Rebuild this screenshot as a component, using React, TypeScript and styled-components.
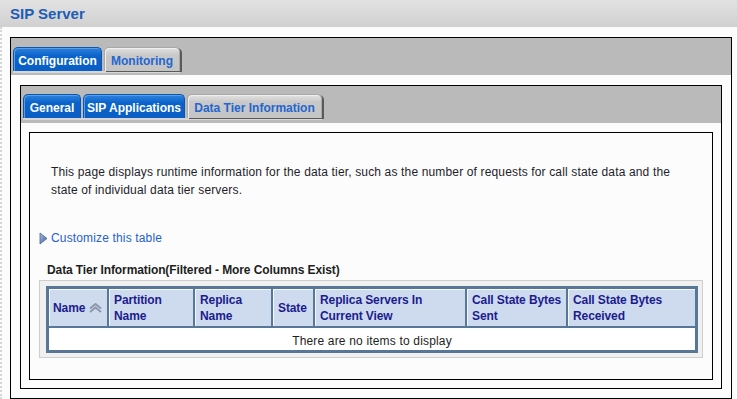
import React from 'react';
import styled, { createGlobalStyle } from 'styled-components';

const GlobalStyle = createGlobalStyle`
  body {
    margin: 0;
    background: #fcfcfc;
    font-family: "Liberation Sans", Arial, sans-serif;
    font-size: 12px;
    color: #1e1e1e;
  }
`;

const Header = styled.div`
  height: 27px;
  padding-left: 10px;
  background: linear-gradient(#e2e2e2, #d0d0d0);
  color: #1d5db5;
  font-size: 15px;
  font-weight: bold;
  line-height: 28px;
`;

const Page = styled.div`
  padding: 10px 5px 0 8px;
  border-left: 2px dotted #d6d6d6;
  height: 372px;
  box-sizing: border-box;
`;

const Frame = styled.div<{ $inset?: number }>`
  border: 1px solid #000;
  background: #fcfcfc;
  padding: 0 ${p => p.$inset ?? 9}px ${p => p.$inset ?? 9}px;
  margin-top: ${p => (p.$inset === 8 ? 10 : 0)}px;
`;

const TabBand = styled.div<{ $top: number }>`
  height: 37px;
  box-sizing: border-box;
  margin: 0 -${p => (p.$top === 9 ? 9 : 8)}px;
  padding: ${p => p.$top}px 0 0 2px;
  background: #bababa;
`;

const TabRow = styled.div`
  display: inline-flex;
  gap: 2px;
  border-bottom: 2px solid #d6d6d6;
`;

const Tab = styled.div<{ $active?: boolean; $w: number }>`
  width: ${p => p.$w}px;
  height: 24px;
  box-sizing: border-box;
  border-radius: 5px 5px 0 0;
  font-weight: bold;
  font-size: 12px;
  line-height: 26px;
  text-align: center;
  white-space: nowrap;
  color: ${p => (p.$active ? '#fff' : '#2366cf')};
  background: ${p =>
    p.$active
      ? 'linear-gradient(#2f82dc, #0a63cb 35%, #0a5ec4)'
      : 'linear-gradient(#e2e2e2, #c9c9c9 30%, #c4c4c4)'};
  border: 1px solid ${p => (p.$active ? '#0b56b0' : '#a8a8a8')};
  border-bottom: none;
  box-shadow: ${p => (p.$active ? 'inset 1px 1px 0 #5a9ee6' : 'inset 1px 1px 0 #f0f0f0, 2px 1px 0 #5a5a5a')};
`;

const Panel = styled.div`
  margin-top: 9px;
  border: 1px solid #000;
  background: #fcfcfc;
  padding: 30px 9px 21px;
`;

const Description = styled.p`
  margin: 0 12px;
  line-height: 18px;
  letter-spacing: 0.15px;
  color: #1e1e2a;
`;

const CustomizeLink = styled.a`
  display: flex;
  align-items: center;
  gap: 3px;
  margin-top: 30px;
  height: 18px;
  letter-spacing: 0.15px;
  color: #1f5fcf;
  text-decoration: none;
  cursor: pointer;
`;

const Caption = styled.div`
  margin: 15px 8px 0;
  line-height: 16px;
  font-weight: bold;
  letter-spacing: -0.1px;
  color: #1e1e1e;
`;

const TableWell = styled.div`
  margin-top: 2px;
  border: 1px solid #cecece;
  background: #f0f0f0;
  padding: 5px 5px 4px 6px;
`;

const Table = styled.table`
  width: 652px;
  table-layout: fixed;
  border-collapse: separate;
  border-spacing: 0;
  border: 3px solid #587797;
`;

const Th = styled.th<{ $w: number; $first?: boolean }>`
  width: ${p => p.$w}px;
  box-sizing: border-box;
  height: 39px;
  padding: 0 3px 0 ${p => (p.$first ? 4 : 5)}px;
  background: #cedbee;
  border-left: ${p => (p.$first ? 'none' : '2px solid #587797')};
  border-bottom: 2px solid #587797;
  box-shadow: inset 1px 1px 0 #f4f8fc;
  color: #1c1c8e;
  font-size: 12px;
  font-weight: bold;
  letter-spacing: -0.1px;
  line-height: 16px;
  text-align: left;
  vertical-align: middle;
`;

const EmptyCell = styled.td`
  height: 22px;
  padding: 3px 0 0;
  box-sizing: border-box;
  background: #fff;
  text-align: center;
  letter-spacing: 0.17px;
  color: #1e1e1e;
`;

const SortLabel = styled.span`
  display: inline-flex;
  align-items: center;
  gap: 3px;
`;

const Arrow = () => (
  <svg width="9" height="13" viewBox="0 0 9 13">
    <defs>
      <linearGradient id="tri" x1="0" y1="0" x2="1" y2="1">
        <stop offset="0" stopColor="#a9bde0" />
        <stop offset="1" stopColor="#3d5f9a" />
      </linearGradient>
    </defs>
    <path d="M1 1 L8 6.5 L1 12 Z" fill="url(#tri)" stroke="#4a6694" strokeWidth="0.8" />
  </svg>
);

const SortIcon = () => (
  <svg width="15" height="10" viewBox="0 0 15 10">
    <path d="M2 5.5 L7.5 1 L13 5.5" fill="none" stroke="#8b97ad" strokeWidth="2" />
    <path d="M2 9 L7.5 4.5 L13 9" fill="none" stroke="#8b97ad" strokeWidth="2" />
  </svg>
);

const columns = [
  { label: 'Name', w: 58 },
  { label: 'Partition Name', w: 86 },
  { label: 'Replica Name', w: 78 },
  { label: 'State', w: 42 },
  { label: 'Replica Servers In Current View', w: 152 },
  { label: 'Call State Bytes Sent', w: 101 },
  { label: 'Call State Bytes Received', w: 129 },
];

export default function App() {
  return (
    <>
      <GlobalStyle />
      <Header>SIP Server</Header>
      <Page>
        <Frame>
          <TabBand $top={9}>
            <TabRow>
              <Tab $active $w={89}>Configuration</Tab>
              <Tab $w={76}>Monitoring</Tab>
            </TabRow>
          </TabBand>
          <Frame $inset={8}>
            <TabBand $top={8}>
              <TabRow>
                <Tab $active $w={58}>General</Tab>
                <Tab $active $w={102}>SIP Applications</Tab>
                <Tab $w={135}>Data Tier Information</Tab>
              </TabRow>
            </TabBand>
            <Panel>
              <Description>
                This page displays runtime information for the data tier, such as the number of requests for call state data and the
                state of individual data tier servers.
              </Description>
              <CustomizeLink>
                <Arrow />
                Customize this table
              </CustomizeLink>
              <Caption>Data Tier Information(Filtered - More Columns Exist)</Caption>
              <TableWell>
                <Table>
                  <thead>
                    <tr>
                      {columns.map((c, i) => (
                        <Th key={c.label} $w={c.w} $first={i === 0}>
                          {i === 0 ? (
                            <SortLabel>
                              {c.label}
                              <SortIcon />
                            </SortLabel>
                          ) : (
                            c.label
                          )}
                        </Th>
                      ))}
                    </tr>
                  </thead>
                  <tbody>
                    <tr>
                      <EmptyCell colSpan={columns.length}>There are no items to display</EmptyCell>
                    </tr>
                  </tbody>
                </Table>
              </TableWell>
            </Panel>
          </Frame>
        </Frame>
      </Page>
    </>
  );
}
